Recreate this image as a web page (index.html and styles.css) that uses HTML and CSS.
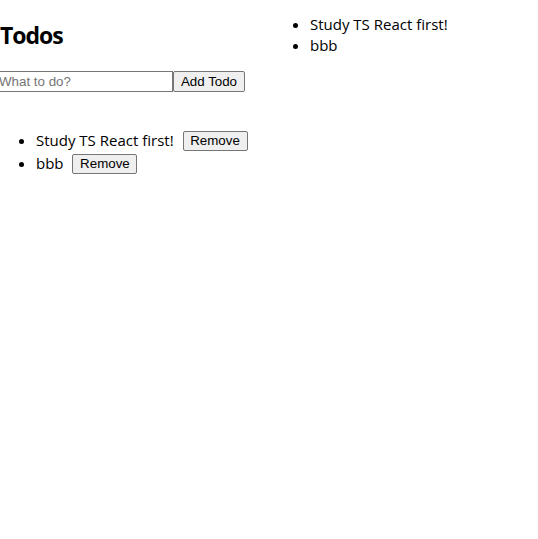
FILE: index.html
```html
<!DOCTYPE html>
<html>
<head>
<meta charset="utf-8">
<link rel="stylesheet" href="styles.css">
</head>
<body>
<div class="app">
  <div class="main">
    <h2 class="title">Todos</h2>
    <form class="add-form">
      <input class="todo-input" type="text" placeholder="What to do?">
      <button class="btn add-btn" type="button">Add Todo</button>
    </form>
    <ul class="todo-list">
      <li class="todo-item">Study TS React first! <button class="btn remove-btn" type="button">Remove</button></li>
      <li class="todo-item">bbb <button class="btn remove-btn" type="button">Remove</button></li>
    </ul>
  </div>
  <ul class="side-list">
    <li class="side-item">Study TS React first!</li>
    <li class="side-item">bbb</li>
  </ul>
</div>
</body>
</html>
```
FILE: styles.css
```css
html, body {
  margin: 0;
  padding: 0;
  background: #fff;
  color: #000;
}
body {
  font-family: "Open Sans", "Noto Sans", sans-serif;
  font-size: 15px;
  line-height: 21px;
}
.app {
  display: grid;
  grid-template-columns: 270px 1fr;
}
.main {
  margin-left: -4px;
}
.title {
  font-size: 23px;
  font-weight: 700;
  line-height: 32px;
  margin: 19px 0 20px 4px;
  letter-spacing: -1px;
}
.add-form {
  display: flex;
  margin: 0;
  height: 21px;
}
.todo-input {
  box-sizing: border-box;
  width: 177px;
  height: 21px;
  margin: 0;
  padding: 1px 2px;
  border: 1px solid #767676;
  border-radius: 0;
  font-family: "Liberation Sans", Arial, sans-serif;
  font-size: 13.333px;
  color: #000;
}
.todo-input::placeholder {
  color: #757575;
}
.btn {
  box-sizing: border-box;
  margin: 0;
  padding: 1px 6px;
  background: #efefef;
  border: 1px solid #767676;
  border-radius: 2px;
  font-family: "Liberation Sans", Arial, sans-serif;
  font-size: 13.333px;
  line-height: 16px;
  color: #000;
}
.add-btn {
  width: 72px;
  height: 21px;
}
.todo-list {
  margin: 37px 0 0;
  padding-left: 40px;
}
.todo-item {
  line-height: 23px;
}
.remove-btn {
  width: 65px;
  height: 20px;
  margin-left: 5px;
  vertical-align: 1px;
}
.side-list {
  margin: 14px 0 0;
  padding-left: 40px;
}
```
